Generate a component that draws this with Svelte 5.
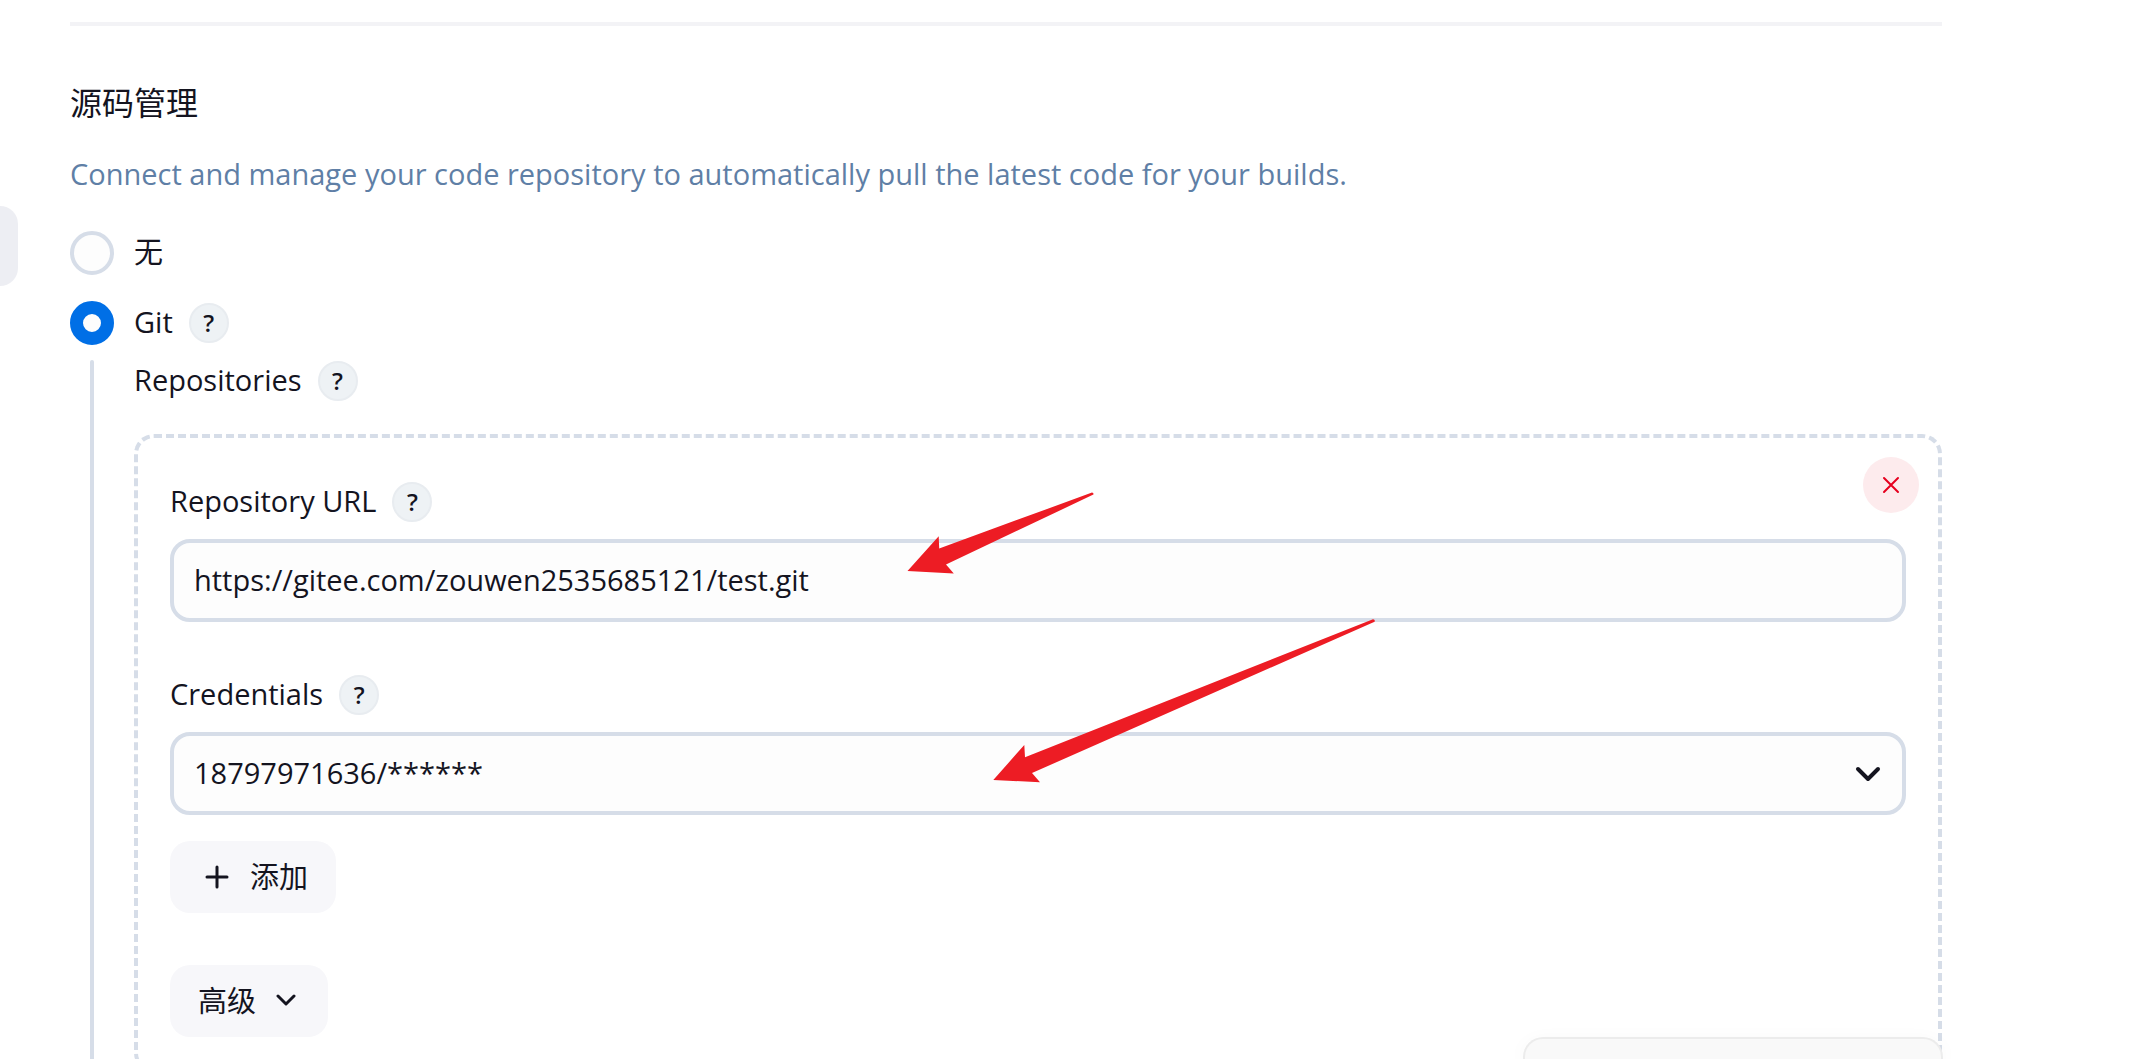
<script lang="ts">
  let scm = $state('git');
  let url = $state('https://gitee.com/zouwen2535685121/test.git');
  let credentials = $state('18797971636/******');
</script>

{#snippet help(topic: string)}
  <button class="help" type="button" aria-label={topic}>?</button>
{/snippet}

<div class="page">
  <aside><a class="tab" href="#scm" aria-label="源码管理"></a></aside>

  <main>
    <hr />
    <section id="scm">
      <h2>源码管理</h2>
      <p class="description">
        Connect and manage your code repository to automatically pull the latest code for your builds.
      </p>

      <div class="choice">
        <input id="scm-none" type="radio" name="scm" value="none" bind:group={scm} />
        <label for="scm-none">无</label>
      </div>
      <div class="choice">
        <input id="scm-git" type="radio" name="scm" value="git" bind:group={scm} />
        <label for="scm-git">Git</label>
        {@render help('Git')}
      </div>

      <div class="nested">
        <div class="line"></div>
        <div class="nested-body">
          <div class="label-row">
            <span>Repositories</span>
            {@render help('Repositories')}
          </div>

          <div class="repository">
            <button class="remove" type="button" aria-label="Delete">
              <svg width="20" height="20" viewBox="0 0 20 20"><path d="M3 3l14 14M17 3L3 17" /></svg>
            </button>

            <div class="field">
              <div class="label-row">
                <label for="url">Repository URL</label>
                {@render help('Repository URL')}
              </div>
              <input id="url" class="control" type="text" bind:value={url} />
              <svg class="arrow arrow-url" width="188" height="84" viewBox="0 0 188 84">
                <path d="M0.5 79L31.7 44.3L32.2 56.4L185 .6Q187 1 186.4 2.6L39 72.4L46.8 81.5Z" />
              </svg>
            </div>

            <div class="field">
              <div class="label-row">
                <label for="credentials">Credentials</label>
                {@render help('Credentials')}
              </div>
              <div class="select">
                <select id="credentials" class="control" bind:value={credentials}>
                  <option>18797971636/******</option>
                </select>
                <svg width="28" height="18" viewBox="0 0 28 18"><path d="M4 4l10 10L24 4" /></svg>
              </div>
              <svg class="arrow arrow-credentials" width="384" height="166" viewBox="0 0 384 166">
                <path d="M0.3 162L31.3 127L32 139.3L380 1.2Q382.4 1.6 381.6 3.8L39 155L47 164.3Z" />
              </svg>
            </div>

            <button class="button add" type="button">
              <svg width="24" height="24" viewBox="0 0 24 24"><path d="M12 2v20M2 12h20" /></svg>
              添加
            </button>
            <button class="button advanced" type="button">
              高级
              <svg width="20" height="14" viewBox="0 0 20 14"><path d="M2 2l8 8 8-8" /></svg>
            </button>
          </div>
        </div>
      </div>
    </section>
    <div class="bottom-bar"></div>
  </main>
</div>

<style>
  :global(body) {
    overflow: hidden;
    background: #fff;
  }

  .page {
    display: grid;
    grid-template-columns: 18px 1fr;
    column-gap: 52px;
    padding-right: 209px;
    box-sizing: border-box;
    color: #14141f;
    font-family: 'Segoe UI', 'Open Sans', 'Noto Sans CJK SC', sans-serif;
    font-size: 29px;
    line-height: 40px;
  }

  .tab {
    display: block;
    height: 80px;
    margin-top: 206px;
    border-radius: 0 20px 20px 0;
    background: #edeef3;
  }

  main {
    position: relative;
    min-width: 0;
  }

  hr {
    height: 4px;
    margin: 22px 0 53px;
    border: 0;
    background: #f3f3f6;
  }

  h2 {
    margin: 0;
    font-size: 32px;
    font-weight: 400;
    line-height: 48px;
  }

  .description {
    margin: 27px 0 37px;
    color: #5f7fa6;
  }

  .choice,
  .label-row {
    display: flex;
    align-items: center;
  }

  .choice {
    height: 44px;
    margin-bottom: 26px;
  }

  .choice label,
  .label-row label,
  .label-row span {
    line-height: 36px;
    padding-bottom: 2px;
  }

  .choice input {
    appearance: none;
    width: 44px;
    height: 44px;
    margin: 0 20px 0 0;
    border: 4px solid #d6dde8;
    border-radius: 50%;
    background: #fdfdfd;
  }

  .choice input:checked {
    border: 13px solid #006fe6;
  }

  .help {
    width: 40px;
    height: 40px;
    margin-left: 16px;
    padding: 0;
    border: 2px solid #e8ecf0;
    border-radius: 50%;
    background: #eef2f5;
    color: inherit;
    font: inherit;
    font-size: 24px;
    font-weight: 600;
    line-height: 36px;
  }

  .nested {
    display: grid;
    grid-template-columns: 44px 1fr;
    column-gap: 20px;
    margin-top: -11px;
  }

  .line {
    width: 4px;
    margin: 0 auto;
    border-radius: 2px;
    background: #d6dde8;
  }

  .nested-body {
    min-width: 0;
    padding-top: 1px;
  }

  .repository {
    position: relative;
    display: flex;
    flex-direction: column;
    align-items: flex-start;
    margin-top: 33px;
    padding: 44px 32px 32px;
    border: 4px dashed #d6dde8;
    border-radius: 20px;
  }

  .remove {
    position: absolute;
    top: 19px;
    right: 19px;
    display: grid;
    place-items: center;
    width: 56px;
    height: 56px;
    padding: 0;
    border: 0;
    border-radius: 50%;
    background: #fdebed;
  }

  svg {
    fill: none;
    stroke: #14141f;
    stroke-width: 2;
    stroke-linecap: round;
    stroke-linejoin: round;
  }

  .remove svg {
    stroke: #e6001f;
  }

  .field {
    position: relative;
    width: 100%;
    margin-bottom: 53px;
  }

  .field + .field {
    margin-bottom: 26px;
  }

  .control {
    appearance: none;
    display: block;
    box-sizing: border-box;
    width: 100%;
    height: 83px;
    margin: 17px 0 0;
    padding: 0 20px 2px;
    border: 4px solid #d6dde8;
    border-radius: 20px;
    background: #fdfdfd;
    color: inherit;
    font: inherit;
  }

  .select {
    display: grid;
    align-items: end;
  }

  .select > * {
    grid-area: 1 / 1;
  }

  .select svg {
    justify-self: end;
    margin: 0 24px 32px 0;
    stroke-width: 4;
    pointer-events: none;
  }

  .arrow {
    position: absolute;
    fill: #ed1c24;
    stroke: none;
    pointer-events: none;
  }

  .arrow-url {
    top: 10px;
    left: 737px;
  }

  .arrow-credentials {
    top: -57px;
    left: 823px;
  }

  .button {
    display: flex;
    align-items: center;
    height: 72px;
    border: 0;
    border-radius: 20px;
    background: #f7f7fa;
    color: inherit;
    font: inherit;
  }

  .add {
    gap: 21px;
    margin-bottom: 52px;
    padding: 0 28px 0 35px;
  }

  .advanced {
    gap: 20px;
    padding: 0 32px 0 28px;
  }

  .add svg,
  .advanced svg {
    stroke-width: 3;
  }

  .bottom-bar {
    position: fixed;
    right: 208px;
    bottom: 0;
    box-sizing: border-box;
    width: 420px;
    height: 22px;
    border: 2px solid #ececec;
    border-bottom: 0;
    border-radius: 20px 20px 0 0;
    background: #f9f9f9;
    box-shadow: 0 4px 20px rgba(0, 0, 0, 0.04);
  }
</style>
